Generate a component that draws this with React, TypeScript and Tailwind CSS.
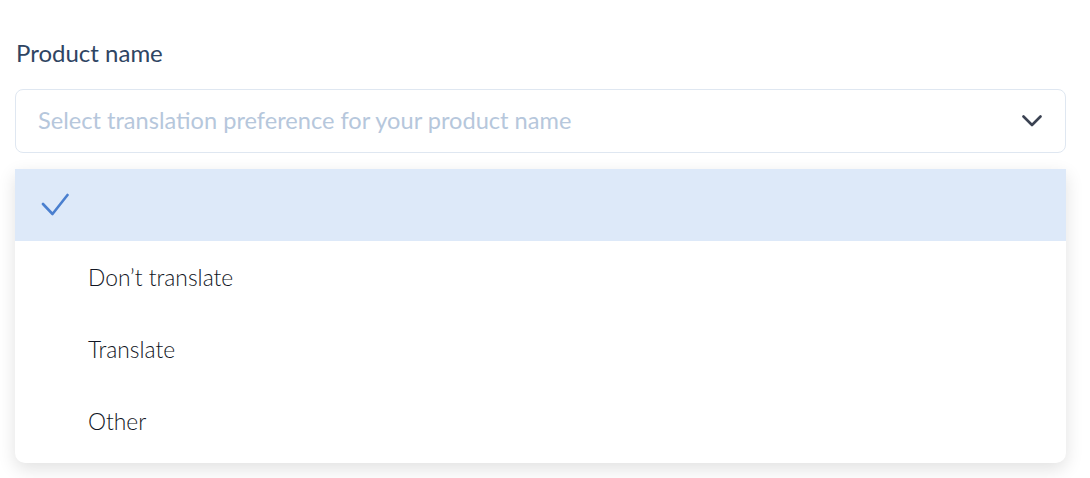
import type { ReactNode } from "react";

const OPTIONS = ["", "Don’t translate", "Translate", "Other"];

function Check() {
  return (
    <svg width="28" height="24" viewBox="0 0 28 24" fill="none" aria-hidden>
      <path
        d="M2 11 L11.5 21 L26.5 2"
        stroke="#4a7fcf"
        strokeWidth="2.6"
        strokeLinecap="round"
        strokeLinejoin="round"
      />
    </svg>
  );
}

function Chevron() {
  return (
    <svg width="20" height="12" viewBox="0 0 20 12" fill="none" aria-hidden>
      <path
        d="M1.5 1.5 L10 10 L18.5 1.5"
        stroke="#3b4252"
        strokeWidth="2.6"
        strokeLinecap="round"
        strokeLinejoin="round"
      />
    </svg>
  );
}

function Row({ selected, children }: { selected?: boolean; children: ReactNode }) {
  return (
    <div
      className={
        selected
          ? "flex h-[72px] items-center bg-[#dde9f9] pl-[26px]"
          : "flex h-[72px] items-center pl-[73px]"
      }
    >
      {children}
    </div>
  );
}

export default function App() {
  return (
    <div
      className="min-h-screen bg-white pl-[15px] pr-[24px] pt-[38px]"
      style={{ fontFamily: "Lato, 'Noto Sans', sans-serif" }}
    >
      <label className="block pl-px text-[24px] leading-[30px] font-normal text-[#2f4563]">
        Product name
      </label>

      <div className="mt-[21px] flex h-[64px] items-center justify-between rounded-lg border border-[#dfe7f1] pl-[22px] pr-[23px]">
        <span className="text-[23.6px] font-normal text-[#b6c7dc]">
          Select translation preference for your product name
        </span>
        <Chevron />
      </div>

      <div className="mt-4 overflow-hidden rounded-b-[10px] bg-white pb-[6px] shadow-[0_6px_18px_rgba(0,0,0,0.12)]">
        {OPTIONS.map((opt, i) =>
          i === 0 ? (
            <Row key={i} selected>
              <Check />
            </Row>
          ) : (
            <Row key={i}>
              <span className="text-[22.8px] font-light text-[#111624]">{opt}</span>
            </Row>
          )
        )}
      </div>
    </div>
  );
}
